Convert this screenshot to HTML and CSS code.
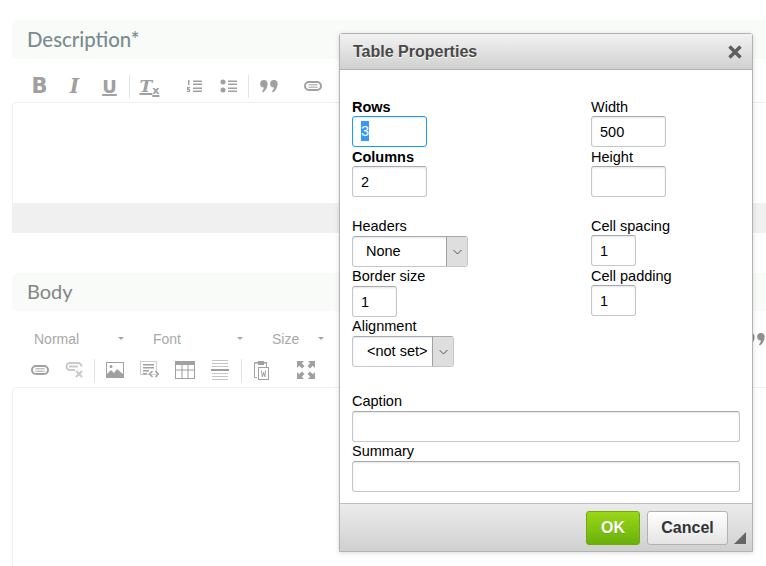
FILE: index.html
```html
<!DOCTYPE html>
<html lang="en">
<head>
    <meta charset="utf-8">
    <title>Table Properties</title>
    <link rel="stylesheet" href="styles.css">
</head>
<body>
    <section class="field">
        <h2 class="field-title">Description*</h2>
        <div class="toolbar toolbar-first">
            <span class="tb-btn glyph-b">B</span>
            <span class="tb-btn glyph-i">I</span>
            <span class="tb-btn glyph-u">U</span>
            <span class="tb-sep"></span>
            <span class="tb-btn glyph-i glyph-t">T<small class="glyph-x">x</small></span>
            <span class="tb-btn tb-group">
                <svg width="16" height="14" viewBox="0 0 16 14"><path d="M2 1h1.500v5H2zM1 8h3v1.200H2.500V10H4v3H1v-1.200h1.800V11H1zM7 1.500h9V3H7zM7 4.500h9V6H7zM7 8.500h9V10H7zM7 11.500h9V13H7z"/></svg>
            </span>
            <span class="tb-btn">
                <svg width="17" height="14" viewBox="0 0 17 14"><circle cx="3" cy="3" r="2.500"/><circle cx="3" cy="11" r="2.500"/><path d="M8 1.500h9V3H8zM8 4.500h9V6H8zM8 8.500h9V10H8zM8 11.500h9V13H8z"/></svg>
            </span>
            <span class="tb-sep"></span>
            <span class="tb-btn">
                <svg width="18" height="14" viewBox="0 0 18 14"><path d="M4 1a3.600 3.600 0 0 1 3.600 3.800C7.600 8.500 5.500 12 3 13.500L2 12.500C3.200 11 3.800 9.800 3.900 8.600A3.800 3.800 0 0 1 4 1zM14 1a3.600 3.600 0 0 1 3.600 3.800C17.600 8.500 15.500 12 13 13.500L12 12.500C13.200 11 13.800 9.800 13.900 8.600A3.800 3.800 0 0 1 14 1z"/></svg>
            </span>
            <span class="tb-btn tb-group">
                <svg class="icon-line" width="18" height="10" viewBox="0 0 18 10"><rect x="1" y="1" width="16" height="8" rx="4"/><path class="icon-thin" d="M4.500 3.800h9M4.500 6.200h9"/></svg>
            </span>
        </div>
        <div class="editor editor-short"></div>
        <div class="editor-foot"></div>
    </section>

    <section class="field field-body">
        <h2 class="field-title field-title-light">Body</h2>
        <div class="combos">
            <span class="combo combo-wide">Normal<i class="combo-arrow"></i></span>
            <span class="combo combo-wide">Font<i class="combo-arrow"></i></span>
            <span class="combo combo-size">Size<i class="combo-arrow"></i></span>
            <span class="combo-quote">
                <svg width="18" height="14" viewBox="0 0 18 14"><path d="M4 1a3.600 3.600 0 0 1 3.600 3.800C7.600 8.500 5.500 12 3 13.500L2 12.500C3.200 11 3.800 9.800 3.900 8.600A3.800 3.800 0 0 1 4 1zM14 1a3.600 3.600 0 0 1 3.600 3.800C17.600 8.500 15.500 12 13 13.500L12 12.500C13.200 11 13.800 9.800 13.900 8.600A3.800 3.800 0 0 1 14 1z"/></svg>
            </span>
        </div>
        <div class="toolbar toolbar-second">
            <span class="tb-btn">
                <svg class="icon-line" width="18" height="10" viewBox="0 0 18 10"><rect x="1" y="1" width="16" height="8" rx="4"/><path class="icon-thin" d="M4.500 3.800h9M4.500 6.200h9"/></svg>
            </span>
            <span class="tb-btn icon-faded">
                <svg class="icon-line" width="19" height="16" viewBox="0 0 19 16"><path d="M10 8H5a3.500 3.500 0 0 1 0-7h8a3.500 3.500 0 0 1 3.500 3.500M4 4.500h9"/><path d="M11 9l6 6M17 9l-6 6"/></svg>
            </span>
            <span class="tb-sep"></span>
            <span class="tb-btn">
                <svg width="18" height="16" viewBox="0 0 18 16"><path fill-rule="evenodd" d="M0 0h18v16H0zM1 1v14h16V1z"/><circle cx="5" cy="4.500" r="1.500"/><path d="M1 15v-3l4-4 3 3 3-4 6 5v3z"/></svg>
            </span>
            <span class="tb-btn">
                <svg width="19" height="18" viewBox="0 0 19 18"><rect class="icon-dots" x=".5" y=".5" width="16" height="13"/><path d="M3 3h11v1.500H3zM3 6h11v1.500H3zM3 9h6v1.500H3zM3 12h4v1.500H3z"/><path class="icon-code" d="M12.500 10l-3 3 3 3M15.500 10l3 3-3 3"/></svg>
            </span>
            <span class="tb-btn">
                <svg width="20" height="18" viewBox="0 0 20 18"><path fill-rule="evenodd" d="M0 0h20v18H0zM1 4v4.500h5.500V4zM7.500 4v4.500h5V4zM13.500 4v4.500H19V4zM1 9.500V17h5.500V9.500zM7.500 9.500V17h5V9.500zM13.500 9.500V17H19V9.500z"/></svg>
            </span>
            <span class="tb-btn">
                <svg width="18" height="20" viewBox="0 0 18 20"><path class="icon-light" d="M1 0h16v1H1zM1 3h16v1H1zM1 6h16v1H1zM1 13h16v1H1zM1 16h16v1H1zM1 19h16v1H1z"/><path d="M0 9h18v2H0z"/></svg>
            </span>
            <span class="tb-sep tb-sep-wide"></span>
            <span class="tb-btn">
                <svg width="17" height="20" viewBox="0 0 17 20"><path fill-rule="evenodd" d="M2 2h3V1h6v1h3v5h-1V3.500h-2V5H5V3.500H2V17h2v1H2a1 1 0 0 1-1-1V3a1 1 0 0 1 1-1z"/><path fill-rule="evenodd" d="M5 7h11v13H5zM6 8v11h9V8z"/><path d="M8 10.500h1l.5 4.500.7-3h.6l.7 3 .5-4.500h1L12.500 17h-1l-.8-3-.8 3h-1z"/></svg>
            </span>
            <span class="tb-btn tb-group">
                <svg width="18" height="18" viewBox="0 0 18 18"><path d="M0 0h7L4.800 2.200 7.500 5 5 7.500 2.200 4.800 0 7zM18 0v7l-2.200-2.200L13 7.500 10.500 5l2.700-2.800L11 0zM0 18v-7l2.200 2.200L5 10.500 7.500 13l-2.700 2.800L7 18zM18 18h-7l2.200-2.200-2.700-2.800 2.500-2.500 2.800 2.700L18 11z"/></svg>
            </span>
        </div>
        <div class="editor editor-tall"></div>
    </section>

    <div class="dialog">
        <div class="dialog-head">
            <span class="dialog-title">Table Properties</span>
            <svg class="dialog-close" width="14" height="14" viewBox="0 0 14 14"><path d="M1.500 1.500l11 11M12.500 1.500l-11 11"/></svg>
        </div>
        <div class="dialog-body">
            <div class="form-cols">
                <div class="form-col form-col-left">
                    <label class="form-label form-label-bold">Rows</label>
                    <div class="form-input form-input-focus"><span class="form-selected">3</span></div>
                    <label class="form-label form-label-bold">Columns</label>
                    <input class="form-input" value="2">
                    <label class="form-label form-gap-left">Headers</label>
                    <div class="form-select form-select-headers"><span>None</span><i class="select-btn"><svg width="9" height="6" viewBox="0 0 9 6"><path d="M.5 1l4 4 4-4"/></svg></i></div>
                    <label class="form-label">Border size</label>
                    <input class="form-input form-input-small" value="1">
                    <label class="form-label">Alignment</label>
                    <div class="form-select form-select-align"><span>&lt;not set&gt;</span><i class="select-btn"><svg width="9" height="6" viewBox="0 0 9 6"><path d="M.5 1l4 4 4-4"/></svg></i></div>
                </div>
                <div class="form-col form-col-right">
                    <label class="form-label">Width</label>
                    <input class="form-input" value="500">
                    <label class="form-label">Height</label>
                    <input class="form-input">
                    <label class="form-label form-gap-right">Cell spacing</label>
                    <input class="form-input form-input-small" value="1">
                    <label class="form-label">Cell padding</label>
                    <input class="form-input form-input-small" value="1">
                </div>
            </div>
            <label class="form-label form-gap-caption">Caption</label>
            <input class="form-input form-input-full">
            <label class="form-label">Summary</label>
            <input class="form-input form-input-full">
        </div>
        <div class="dialog-foot">
            <button class="btn btn-ok">OK</button>
            <button class="btn btn-cancel">Cancel</button>
            <i class="dialog-resize"></i>
        </div>
    </div>
</body>
</html>
```

FILE: styles.css
```css
html, body {
    height: 566px;
    overflow: hidden;
}
body {
    margin: 0;
    padding: 20px 0 0 12px;
    box-sizing: border-box;
    background: #fff;
    font-family: "Liberation Sans", Arial, sans-serif;
    color: #000;
}

/* page behind the dialog */
.field-body {
    margin-top: 40px;
}
.field-title {
    margin: 0;
    height: 39px;
    padding-left: 15px;
    border-radius: 5px 0 0 5px;
    background: #f9fbf9;
    font: 500 20.400px/39px Lato, sans-serif;
    color: #7c8b90;
}
.field-title-light {
    height: 38px;
    line-height: 36px;
    font-size: 20px;
    font-weight: 400;
    color: #858585;
}
.toolbar {
    display: flex;
    align-items: center;
    padding-left: 10px;
}
.toolbar-first {
    margin-top: 11px;
    height: 32px;
}
.toolbar-second {
    margin-top: 7px;
    height: 24px;
    padding-bottom: 5px;
}
.tb-btn {
    width: 35px;
    flex: none;
    display: flex;
    align-items: center;
    justify-content: center;
    color: #a0a0a0;
}
.tb-btn svg {
    fill: #a0a0a0;
}
.tb-btn svg.icon-line {
    fill: none;
    stroke: #a0a0a0;
    stroke-width: 2;
}
.tb-btn svg .icon-thin {
    stroke-width: 1;
}
.tb-btn svg .icon-dots {
    fill: none;
    stroke: #a0a0a0;
    stroke-dasharray: 1 1;
}
.tb-btn svg .icon-code {
    fill: none;
    stroke: #a0a0a0;
    stroke-width: 1.500;
}
.tb-btn svg .icon-light {
    fill: #c4c4c4;
}
.icon-faded {
    opacity: .55;
}
.tb-group {
    margin-left: 9px;
}
.tb-sep {
    width: 1px;
    height: 23px;
    margin: 0 2px;
    background: #e4e4e4;
}
.tb-sep-wide {
    margin: 0 2px 0 4px;
}
.glyph-b {
    font: bold 21px "DejaVu Sans", sans-serif;
}
.glyph-i {
    font: italic bold 20px "DejaVu Serif", serif;
    text-decoration: underline;
    text-decoration-thickness: 2px;
}
.glyph-t {
    font-size: 17px;
}
.glyph-u {
    font: bold 18px "DejaVu Sans", sans-serif;
    text-decoration: underline;
    text-decoration-thickness: 2px;
}
.toolbar-first .tb-btn:nth-child(2) {
    text-decoration: none;
}
.glyph-x {
    font: bold 11px "DejaVu Sans", sans-serif;
    display: inline-block;
    transform: translateY(4px);
}
.editor {
    border: 1px solid #f0f0f0;
    border-bottom: 0;
    border-right: 0;
    border-radius: 5px 0 0 0;
    background: #fff;
}
.editor-short {
    height: 100px;
}
.editor-tall {
    height: 178px;
}
.editor-foot {
    height: 30px;
    background: #f0f0f0;
}
.combos {
    display: flex;
    align-items: center;
    margin-top: 15px;
    height: 25px;
    padding-left: 22px;
    font-size: 14px;
    color: #a8a8a8;
}
.combo {
    flex: none;
    display: flex;
    align-items: center;
    justify-content: space-between;
    box-sizing: border-box;
}
.combo-wide {
    width: 119px;
    padding-right: 29px;
}
.combo-size {
    width: 52px;
}
.combo-arrow {
    width: 0;
    height: 0;
    border-left: 3px solid transparent;
    border-right: 3px solid transparent;
    border-top: 3px solid #a8a8a8;
}
.combo-quote {
    display: flex;
    margin-left: 423px;
}
.combo-quote svg {
    fill: #8f8f8f;
}

/* dialog */
.dialog {
    position: absolute;
    left: 339px;
    top: 33px;
    width: 414px;
    height: 519px;
    box-sizing: border-box;
    display: flex;
    flex-direction: column;
    border: 1px solid #b2b2b2;
    border-radius: 3px 3px 0 0;
    background: #fff;
    box-shadow: 0 1px 5px rgba(0, 0, 0, .15);
}
.dialog-head {
    height: 36px;
    flex: none;
    box-sizing: border-box;
    display: flex;
    align-items: center;
    justify-content: space-between;
    padding: 0 10px 0 13px;
    border-bottom: 1px solid #b2b2b2;
    background: linear-gradient(#f2f2f2, #cfd1cf);
}
.dialog-title {
    font-weight: bold;
    font-size: 16px;
    color: #484848;
    text-shadow: 0 1px 0 #fff;
}
.dialog-close {
    fill: none;
    stroke: #5f5f5f;
    stroke-width: 3.500;
}
.dialog-body {
    flex: 1;
    padding: 27px 12px 0;
}
.form-cols {
    display: flex;
}
.form-col {
    display: flex;
    flex-direction: column;
    align-items: flex-start;
}
.form-col-left {
    width: 239px;
}
.form-label {
    display: block;
    height: 19px;
    font-size: 14.500px;
    line-height: 19px;
    color: #000;
}
.form-col-right .form-label,
.form-label-bold {
    line-height: 21px;
}
.form-label-bold {
    font-weight: bold;
}
.form-gap-left {
    margin-top: 20px;
}
.form-gap-right {
    margin-top: 19px;
}
.form-gap-caption {
    margin-top: 25px;
}
.form-input {
    display: block;
    width: 75px;
    height: 31px;
    box-sizing: border-box;
    padding: 0 8px;
    border: 1px solid #c4c7ca;
    border-top-color: #a6abb1;
    border-radius: 3px;
    background: #fff;
    box-shadow: inset 0 1px 2px rgba(0, 0, 0, .1);
    font: 14.500px/29px "Liberation Sans", Arial, sans-serif;
    color: #000;
    outline: none;
}
.form-input-small {
    width: 45px;
}
.form-input-full {
    width: 388px;
}
.form-input-focus {
    border-color: #139ff7;
}
.form-selected {
    display: inline-block;
    height: 20px;
    line-height: 20px;
    background: #3399ff;
    color: #fff;
}
.form-select {
    display: flex;
    height: 31px;
    box-sizing: border-box;
    border: 1px solid #c4c7ca;
    border-top-color: #a6abb1;
    border-radius: 3px;
    background: #fff;
    box-shadow: inset 0 1px 2px rgba(0, 0, 0, .1);
    font-size: 14.500px;
    line-height: 29px;
    overflow: hidden;
}
.form-select span {
    flex: 1;
    padding-left: 13px;
}
.form-select-headers {
    width: 116px;
}
.form-select-align {
    width: 102px;
}
.form-select-align span {
    padding-left: 14px;
}
.select-btn {
    width: 20px;
    flex: none;
    display: flex;
    align-items: center;
    justify-content: center;
    border-left: 1px solid #9ea2a6;
    background: #dedede;
}
.select-btn svg {
    fill: none;
    stroke: #555;
}
.dialog-foot {
    position: relative;
    height: 48px;
    flex: none;
    box-sizing: border-box;
    display: flex;
    justify-content: flex-end;
    gap: 7px;
    padding: 7px 24px 0 0;
    border-top: 1px solid #bfbfbf;
    background: linear-gradient(#ebebeb, #cfd1cf);
}
.btn {
    height: 34px;
    box-sizing: border-box;
    border-radius: 3px;
    font: bold 16px "Liberation Sans", Arial, sans-serif;
    padding: 0;
}
.btn-ok {
    width: 54px;
    border: 1px solid #6fa80f;
    background: linear-gradient(#9ad717, #69b10b);
    color: #fff;
    text-shadow: 0 1px 0 #6fa80f;
}
.btn-cancel {
    width: 81px;
    border: 1px solid #b2b2b2;
    background: linear-gradient(#fff, #e4e4e4);
    color: #333;
}
.dialog-resize {
    position: absolute;
    right: 6px;
    bottom: 7px;
    width: 0;
    height: 0;
    border-left: 12px solid transparent;
    border-bottom: 12px solid #666;
}
```
